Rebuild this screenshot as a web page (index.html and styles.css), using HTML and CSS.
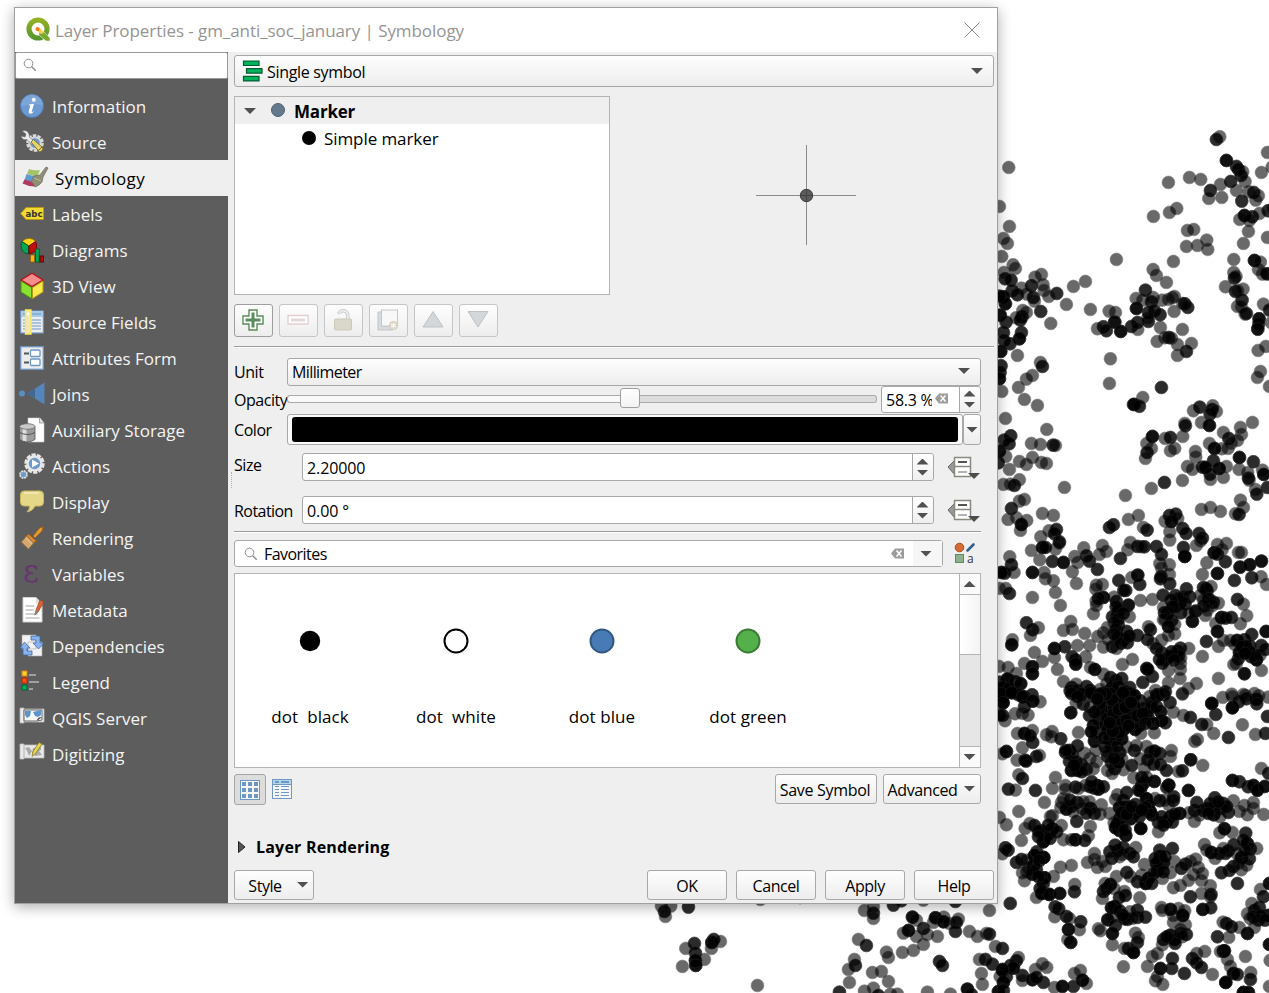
FILE: index.html
```html
<!DOCTYPE html>
<html lang="en">
<head>
<meta charset="utf-8">
<title>Layer Properties</title>
<link rel="stylesheet" href="styles.css">
</head>
<body>
<svg class="map" id="map" width="1269" height="993" viewBox="0 0 1269 993"></svg>
<div class="dialog">
  <header class="titlebar">
    <svg class="logo" width="26" height="26" viewBox="0 0 26 26"><defs><linearGradient id="q" x2="0" y2="1"><stop stop-color="#93b023"/><stop offset="1" stop-color="#589632"/></linearGradient></defs><circle cx="13" cy="12" r="9" fill="none" stroke="url(#q)" stroke-width="5.200"/><path d="M14 14l4 0 7 7v3h-4l-7-6z" fill="#78a82c" stroke="#fff" stroke-width=".5"/><path d="M12 11l4 1 3 4-3 1-4-3z" fill="#f5cf55"/><circle cx="12.500" cy="12" r="2" fill="#ee7913"/></svg>
    <span class="title">Layer Properties - gm_anti_soc_january | Symbology</span>
    <svg class="close" width="18" height="18" viewBox="0 0 18 18"><path d="M1.500 1.500l15 15M16.500 1.500l-15 15" stroke="#8c8c8c" fill="none"/></svg>
  </header>
  <div class="body">
    <nav class="side">
      <div class="search"><svg width="14" height="14" viewBox="0 0 14 14" fill="none" stroke="#8e8e8e"><circle cx="5.500" cy="5.500" r="4.300"/><path d="M8.700 8.700l4 4" stroke-width="1.500"/></svg></div>
      <div class="items">
        <div class="item"><svg viewBox="0 0 24 24"><circle cx="12" cy="12" r="11.500" fill="#6d9bd1" stroke="#4c7cb8"/><path d="M1 12a11 11 0 0 1 22-1Q12 9 1 12" fill="#87aedb" opacity=".6"/><circle cx="13.800" cy="5.800" r="2" fill="#fff"/><path d="M9 10.500l5-.8-2.300 8q0 1 2.500-.8-2 3.300-4.500 2.700-1.600-.5-.9-2.800l1.500-5q-.3-.7-1.700-.3z" fill="#fff"/></svg><span>Information</span></div>
        <div class="item"><svg viewBox="0 0 24 24"><circle cx="15" cy="13" r="7.500" fill="none" stroke="#dcdcdc" stroke-width="2.600" stroke-dasharray="3.500 1.200"/><circle cx="15" cy="13" r="5.800" fill="#6b9acb" stroke="#d6d6d6" stroke-width="2"/><path d="M2 1l4 3-1 3-4-1q1 4.500 6 3.500l5 5 2.500-2.500-5-5Q9.500 1.500 5 .5z" fill="#ececec" stroke="#666" stroke-width=".6"/><path d="M11 12l2.500-2.500 9.500 8.500q0 3-3.500 4z" fill="#e9d36c" stroke="#6b6026" stroke-width=".8"/><path d="M18.500 20.500l4-4" stroke="#6b6026"/></svg><span>Source</span></div>
        <div class="item active"><svg viewBox="0 0 26 24"><path d="M7 3q5 2 11 1l-3 7-10-3z" fill="#a4c46c"/><path d="M4.500 8l10 3-2 5-10-2z" fill="#5f9bd3"/><path d="M2.500 13.500l11 3-1 4q-6 0-12-3z" fill="#b03a5c"/><path d="M12 10l6-1 6-8 2 1-5 9-1 5q-3 4-7 5-1-4-4-5z" fill="#918e77" stroke="#74725f" stroke-width=".8"/><path d="M12 12l7 3" stroke="#bcb99c"/></svg><span>Symbology</span></div>
        <div class="item"><svg viewBox="0 0 24 24"><path d="M6 5.500h17.500v12H6L.7 11.500z" fill="#f2d934" stroke="#b99a12"/><text x="5.500" y="14.500" font-family="DejaVu Sans" font-size="9.500" font-weight="700" fill="#333" textLength="17" lengthAdjust="spacingAndGlyphs">abc</text></svg><span>Labels</span></div>
        <div class="item"><svg viewBox="0 0 24 24"><path d="M9 8L2 3.500Q9-3 16 3.500z" fill="#fcd116" stroke="#8a6d00" stroke-width=".8"/><path d="M8.500 8v8Q1 15 1 8q0-3 1-4.500z" fill="#00a651" stroke="#045c32"/><path d="M9 8v8q8-2 7.500-8 0-3-1-4.500z" fill="#c00d0d" stroke="#700"/><rect x="10.500" y="17" width="4" height="7" fill="#fcb416" stroke="#8a5d00" stroke-width=".7"/><rect x="15.500" y="11" width="3.800" height="13" fill="#00a651" stroke="#045c32"/><rect x="20" y="18" width="3.500" height="6" fill="#b20d0d" stroke="#600"/></svg><span>Diagrams</span></div>
        <div class="item"><svg viewBox="0 0 24 24"><path d="M12-.8L23 6 12 12.500 1 6z" fill="#f58d8d" stroke="#b5121b" stroke-width="1.300"/><path d="M1 7l10.500 6.500v11L1 18z" fill="#8ae234" stroke="#4e9a06"/><path d="M23 7l-10.500 6.500v11L23 18z" fill="#fce94f" stroke="#b59b10"/></svg><span>3D View</span></div>
        <div class="item"><svg viewBox="0 0 24 24"><rect x=".7" y="1" width="22.600" height="22" fill="#eee" stroke="#6d97c4" stroke-width="1.200"/><path d="M1 1h22v6H1z" fill="#a5cbe6"/><path d="M3 4h18M3 10h18M3 13h18M3 16h18M3 19h18" stroke="#6d97c4" stroke-dasharray="7 1.500 12"/><path d="M5.500 0h5.500v24H5.500z" fill="#efe6bd" stroke="#fce94f" stroke-width="1.400"/><circle cx="8.200" cy="4" r="1.400" fill="#fff"/></svg><span>Source Fields</span></div>
        <div class="item"><svg viewBox="0 0 24 24"><rect x=".7" y=".7" width="22.600" height="22.600" fill="#ececec" stroke="#6d97c4" stroke-width="1.300"/><path d="M4 7.500h5M4 16.500h5" stroke="#555" stroke-width="2"/><rect x="10.500" y="4" width="9.500" height="6.500" rx="1" fill="#fff" stroke="#6d97c4" stroke-width="1.300"/><rect x="10.500" y="13" width="9.500" height="6.500" rx="1" fill="#fff" stroke="#6d97c4" stroke-width="1.300"/></svg><span>Attributes Form</span></div>
        <div class="item"><svg viewBox="0 0 24 24"><circle cx="2" cy="11.500" r="3" fill="#5c8ec4"/><path d="M7 11.500L24.500.5v22z" fill="#5585ba"/><path d="M7 11.500l8-5v10z" fill="#416991"/></svg><span>Joins</span></div>
        <div class="item"><svg viewBox="0 0 24 24"><path d="M8 0h12l4 5v19H8z" fill="#fff" stroke="#ccc" stroke-width=".6"/><path d="M19.500 0v5H24" fill="#ddd" stroke="#888" stroke-width=".7"/><path d="M-.5 8.500v13q8 5 15.500 0v-13" fill="#9b9b9b" stroke="#555" stroke-width=".8"/><path d="M2.500 9.500v13l4 1v-13z" fill="#dedede"/><ellipse cx="7.300" cy="8.500" rx="7.700" ry="2.800" fill="#c8c8c8" stroke="#666" stroke-width=".8"/><path d="M-.5 14.500q8 4 15.500 0" fill="none" stroke="#555"/></svg><span>Auxiliary Storage</span></div>
        <div class="item"><svg viewBox="0 0 24 24"><circle cx="14.500" cy="9.500" r="8.700" fill="none" stroke="#e7e7e7" stroke-width="3" stroke-dasharray="4.200 1.200"/><circle cx="14.500" cy="9.500" r="7" fill="#6b9acb" stroke="#e7e7e7" stroke-width="2.500"/><path d="M12 5.500v8l7-4z" fill="#fff"/><circle cx="3.500" cy="20.500" r="3.500" fill="#6b9acb" stroke="#ddd" stroke-width="1.800" stroke-dasharray="2 .7"/></svg><span>Actions</span></div>
        <div class="item"><svg viewBox="0 0 24 24"><path d="M4 1h16q3.500 0 3.500 4v7q0 4-3.500 4h-5q-2 5-8 6 3-3 2.500-6H4Q.5 16 .5 12V5Q.5 1 4 1z" fill="#e4d888" stroke="#c8b95b"/><path d="M4 3h15" stroke="#f2ecbe" stroke-width="1.500"/></svg><span>Display</span></div>
        <div class="item"><svg viewBox="0 0 24 24"><path d="M13 10l7-8.500 3-.5-1 4-7 7z" fill="#e29a31" stroke="#9e641b"/><path d="M8.500 8l8 7-3 2-7-7z" fill="#d68e35" stroke="#9b5d18"/><path d="M6.500 10l7 7-5 6L1.500 16z" fill="#e0b77e" stroke="#9d7035"/><path d="M4.500 13l6 6M3.500 15l6 6" stroke="#b98d55"/></svg><span>Rendering</span></div>
        <div class="item"><svg viewBox="0 0 24 24"><text x="3" y="19.500" font-family="DejaVu Serif" font-size="31" fill="#68366f">ε</text></svg><span>Variables</span></div>
        <div class="item"><svg viewBox="0 0 24 24"><path d="M3-.5h13l6 6V24H3z" fill="#fff" stroke="#d2d2d2"/><path d="M16-.5v6h5" fill="#ddd"/><path d="M5.500 8h9M5.500 12h8M5.500 16h12M5.500 20h14" stroke="#a3a3a3" stroke-width="1.200"/><path d="M20 2l4 2-6 10-3 3 1-5z" fill="#dc6236" stroke="#96401e" stroke-width=".7"/><path d="M16 12l2 2-3.500 3.500z" fill="#888"/></svg><span>Metadata</span></div>
        <div class="item"><svg viewBox="0 0 24 24"><path d="M2 1h14v14H2zM8 8h14v14H8z" fill="#f2f2f2" stroke="#aaa" stroke-width=".6"/><path d="M11 2h9v7h4l-5.500 6L13 9h3V6h-5z" fill="#8ab3ec" stroke="#386bb0" stroke-width=".8"/><path d="M12 21H3v-7H0l4.500-6L10 14H7v3h5z" fill="#8ab3ec" stroke="#386bb0" stroke-width=".8"/></svg><span>Dependencies</span></div>
        <div class="item"><svg viewBox="0 0 24 24"><path d="M9 5h7M9 12h10M9 19h4" stroke="#a0a0a0" stroke-width="2"/><rect x="2" y="1" width="5" height="5" fill="#ffd12b" stroke="#db8510"/><rect x="2" y="8" width="5" height="5" fill="#ff4f12" stroke="#b52a00"/><rect x="2" y="15" width="5" height="5" fill="#00b05a" stroke="#045f31"/></svg><span>Legend</span></div>
        <div class="item"><svg viewBox="0 0 24 24"><path d="M0 2h4v15H0zM4 3h20v13H4z" fill="#eee" stroke="#b5b5b5" stroke-width=".8"/><path d="M4 4h18v10l-5 1H4z" fill="#f7f7f7" stroke="#666"/><path d="M5 5h6l-1 5-3 2-2-3zM13 6l8-2v5l-3 2-3-1z" fill="#5f94ca"/><path d="M17 15q0-4 5-4z" fill="#444"/></svg><span>QGIS Server</span></div>
        <div class="item"><svg viewBox="0 0 24 24"><path d="M0 2h4v15H0zM4 3h20v13H4z" fill="#e9e9e9" stroke="#bbb" stroke-width=".8"/><path d="M5 6l4-1 3 4-3 5-2-5zM13 6l8-1v3l-2 1 3 4-7 1-3-3z" fill="#aaa"/><path d="M12 14.500l1-5 6-9 3 1.500-6 9z" fill="#e6d850" stroke="#867a1f" stroke-width=".8"/></svg><span>Digitizing</span></div>
      </div>
    </nav>
    <main class="main">
      <div class="split"></div>
      <div class="combo renderer"><svg width="22" height="22" viewBox="0 0 22 22" fill="#00b25c" stroke="#075c32" stroke-width="1.200"><path d="M1.500 1h15.500v4.500H1.500zM4.500 8.700H20v4.500H4.500zM1.500 16.400h15.500v4.500H1.500z"/></svg><span class="ui">Single symbol</span><i class="tri"></i></div>
      <div class="symbol">
        <div class="tree">
          <div class="node root"><i class="tri"></i><i class="swatch slate"></i><b class="ui">Marker</b></div>
          <div class="node leaf"><i class="swatch black"></i><span>Simple marker</span></div>
        </div>
        <svg class="preview" width="100" height="100" viewBox="0 0 100 100"><path d="M0 50.500h100M50.500 0v100" stroke="#8b8b8b"/><circle cx="50.500" cy="50.500" r="6.200" fill="#5c5c5c" stroke="#3c3c3c"/><path d="M44 50.500h13M50.500 44v13" stroke="#444"/></svg>
      </div>
      <div class="tools">
        <div class="btn on"><svg viewBox="0 0 24 24"><path d="M8 2h8v6h6v8h-6v6H8v-6H2V8h6z" fill="#fff" stroke="#5a8c5a" stroke-width="1.400"/><path d="M12 4.500v15M4.500 12h15" stroke="#5a8c5a" stroke-width="3"/></svg></div>
        <div class="btn"><svg viewBox="0 0 24 24"><path d="M2 7.500h20v8.500H2z" fill="#fff" stroke="#e3cece" stroke-width="1.300"/><path d="M5 12h14" stroke="#e1d8d8" stroke-width="3"/></svg></div>
        <div class="btn"><svg viewBox="0 0 24 24"><rect x="3.500" y="11" width="17" height="11" rx="1" fill="#dad8cb" stroke="#cdcaba"/><path d="M18 11V6q-1-4.500-6-4.500-4 0-5.500 3.500l2 .8Q10 4 12 4q3.500 0 3.500 3v4" fill="#eee" stroke="#ccc"/></svg></div>
        <div class="btn"><svg viewBox="0 0 24 24"><path d="M2 4h4v14h11v4H2z" fill="#d8dbdd" stroke="#c1c5c8"/><rect x="5.500" y="2" width="16" height="16" fill="#f8f8f8" stroke="#c4c8ca"/><circle cx="17.500" cy="17.500" r="4.500" fill="#d6d2c0"/><path d="M17.500 14.500v6M15 16l5 3M20 16l-5 3" stroke="#fff" stroke-width="1.300"/></svg></div>
        <div class="btn"><svg viewBox="0 0 24 24"><path d="M12 3.500L22 19H2z" fill="#d4d7d9" stroke="#bfc2c5"/></svg></div>
        <div class="btn"><svg viewBox="0 0 24 24"><path d="M2 3.500h20L12 19z" fill="#d4d7d9" stroke="#bfc2c5"/></svg></div>
      </div>
      <hr class="rule wide">
      <div class="row unit"><label class="ui">Unit</label><div class="combo"><span class="ui">Millimeter</span><i class="tri"></i></div></div>
      <div class="row opacity"><label class="ui">Opacity</label><div class="slider"><div class="groove"></div><div class="knob"></div><div class="groove rest"></div></div>
        <div class="spin"><span class="ui clip">58.3 %</span><svg class="clear" width="14" height="11" viewBox="0 0 14 11"><path d="M0 5.500L4 .5h9v10H4z" fill="#9c9c9c"/><path d="M5.500 2.500l5 6M10.500 2.500l-5 6" stroke="#fff" stroke-width="1.500"/></svg><div class="steps"><i class="up"></i><i class="tri"></i></div></div></div>
      <div class="row color"><label class="ui">Color</label><div class="colorbox"><div></div></div><div class="drop"><i class="tri"></i></div></div>
      <div class="row size"><label class="ui">Size</label><div class="spin"><span class="ui num">2.20000</span><div class="steps"><i class="up"></i><i class="tri"></i></div></div><svg class="dd" width="34" height="26" viewBox="0 0 34 26"><path d="M8 5v15L1 12z" fill="#999" stroke="#666"/><path d="M7.500 2.500h16v19h-16zM8 11.500h15" fill="#fff" stroke="#89897f" stroke-width="1.500"/><path d="M11 7h9" stroke="#555" stroke-width="2"/><path d="M11 17h9" stroke="#888" stroke-width="1.300"/><path d="M21 18h12l-6 6z" fill="#4c4c4c"/></svg></div>
      <div class="row rotation"><label class="ui">Rotation</label><div class="spin"><span class="ui num">0.00 °</span><div class="steps"><i class="up"></i><i class="tri"></i></div></div><svg class="dd" width="34" height="26" viewBox="0 0 34 26"><path d="M8 5v15L1 12z" fill="#999" stroke="#666"/><path d="M7.500 2.500h16v19h-16zM8 11.500h15" fill="#fff" stroke="#89897f" stroke-width="1.500"/><path d="M11 7h9" stroke="#555" stroke-width="2"/><path d="M11 17h9" stroke="#888" stroke-width="1.300"/><path d="M21 18h12l-6 6z" fill="#4c4c4c"/></svg></div>
      <hr class="rule">
      <div class="row fav"><div class="favbox"><svg width="14" height="14" viewBox="0 0 14 14" fill="none" stroke="#8e8e8e"><circle cx="5.500" cy="5.500" r="4.300"/><path d="M8.700 8.700l4 4" stroke-width="1.500"/></svg><span class="ui">Favorites</span><svg class="clear" width="14" height="11" viewBox="0 0 14 11"><path d="M0 5.500L4 .5h9v10H4z" fill="#9c9c9c"/><path d="M5.500 2.500l5 6M10.500 2.500l-5 6" stroke="#fff" stroke-width="1.500"/></svg><div class="arrow"><i class="tri"></i></div></div>
        <svg class="manager" width="22" height="26" viewBox="0 0 22 26"><circle cx="5.500" cy="5.500" r="4.300" fill="#d56b36" stroke="#ac4b1a"/><path d="M13.500 8.500l6-6" stroke="#33608f" stroke-width="2.600" stroke-linecap="round"/><rect x="1.500" y="12.500" width="8" height="8" fill="#8fb08f" stroke="#54915a"/><text x="13" y="20.500" font-family="Open Sans" font-size="12" fill="#333">a</text></svg></div>
      <div class="list">
        <div class="cells">
          <div class="cell"><svg width="28" height="28" viewBox="0 0 28 28"><circle cx="14" cy="14" r="10.200"/></svg><span>dot&nbsp; black</span></div>
          <div class="cell"><svg width="28" height="28" viewBox="0 0 28 28"><circle cx="14" cy="14" r="11.500" fill="#fff" stroke="#000" stroke-width="2"/></svg><span>dot&nbsp; white</span></div>
          <div class="cell"><svg width="28" height="28" viewBox="0 0 28 28"><circle cx="14" cy="14" r="11.500" fill="#487bb6" stroke="#325780" stroke-width="2"/></svg><span>dot blue</span></div>
          <div class="cell"><svg width="28" height="28" viewBox="0 0 28 28"><circle cx="14" cy="14" r="11.500" fill="#54b04a" stroke="#3a7b33" stroke-width="2"/></svg><span>dot green</span></div>
        </div>
        <div class="scroll"><div class="end"><i class="up"></i></div><div class="thumb"></div><div class="track"></div><div class="end"><i class="tri"></i></div></div>
      </div>
      <div class="row views">
        <div class="toggle"><svg width="20" height="20" viewBox="0 0 20 20"><rect x=".5" y=".5" width="19" height="19" fill="#f6f6f6" stroke="#6d97c4"/><path d="M4 2v17M10 2v17M16 2v17" stroke="#6d97c4" stroke-width="4" stroke-dasharray="4 2"/></svg></div>
        <svg class="table" width="20" height="20" viewBox="0 0 20 20"><rect x=".5" y=".5" width="19" height="19" fill="#f6f6f6" stroke="#6d97c4"/><path d="M1 1h18v4H1z" fill="#b4d6eb"/><path d="M1 5.500h18M3 7.500h4M9 7.500h8M3 10.500h4M9 10.500h8M3 13.500h4M9 13.500h8M3 16.500h4M9 16.500h8" stroke="#6d97c4"/><path d="M3 3h4M9 3h8" stroke="#6d97c4" stroke-width="2"/></svg>
        <button class="push save ui">Save Symbol</button>
        <button class="push adv ui"><span>Advanced</span><i class="tri"></i></button>
      </div>
      <div class="group"><svg width="8" height="12" viewBox="0 0 8 12"><path d="M.5.5L7 6 .5 11.500z" fill="#555" stroke="#222"/></svg><b class="ui">Layer Rendering</b></div>
      <div class="foot"><button class="push style ui"><span>Style</span><i class="tri"></i></button><button class="push ui">OK</button><button class="push ui">Cancel</button><button class="push ui">Apply</button><button class="push ui">Help</button></div>
    </main>
  </div>
</div>
<script src="points.js"></script>
</body>
</html>
```
FILE: styles.css
```css
* { box-sizing: border-box; }
body { margin: 0; width: 1269px; height: 993px; overflow: hidden; position: relative; background: #fff; font-family: "Open Sans", "Noto Sans", sans-serif; font-size: 17px; color: #000; }
.map { position: absolute; left: 0; top: 0; display: block; }
.dialog { position: absolute; left: 14px; top: 7px; width: 984px; height: 897px; border: 1px solid #a0a0a0; background: #efefef; display: flex; flex-direction: column; box-shadow: 0 3px 13px rgba(0,0,0,.32); }
.titlebar { height: 44px; flex: none; background: #fff; display: flex; align-items: center; padding: 0 16px 0 10px; color: #949494; font-size: 17px; letter-spacing: -.07px; }
.logo { margin-right: 4px; }
.title { flex: 1; white-space: nowrap; }
.body { flex: 1; display: flex; min-height: 0; }
.side { width: 213px; background: #5d5d5d; }
.search { height: 27px; background: #fff; border: 1px solid #999; border-radius: 2px; padding: 5px 0 0 7px; }
.search svg { display: block; }
.items { padding-top: 9px; }
.item { height: 36px; display: flex; align-items: center; padding-left: 5px; color: #f4f4f4; white-space: nowrap; }
.item svg { width: 24px; height: 24px; margin: -1px 8px 0 0; overflow: visible; }
.item span { padding-top: 1px; }
.item.active { background: #efefef; color: #000; padding-left: 7px; }
.item.active svg { width: 26px; margin-right: 7px; }
.item.active span { letter-spacing: .4px; }
.main { flex: 1; padding: 3px 3px 3px 6px; display: flex; flex-direction: column; position: relative; min-width: 0; }
.split { position: absolute; left: 3px; top: 420px; height: 16px; border-left: 1px dotted #b0b0b0; }
.ui { font-size: 16px; letter-spacing: -.45px; white-space: nowrap; }
.combo, .push, .btn, .drop { border: 1px solid #a8a8a8; border-radius: 3px; background: linear-gradient(#fefefe, #ededed); }
.combo { display: flex; align-items: center; padding: 0 10px 0 4px; }
.combo .ui { flex: 1; padding-top: 2px; }
.tri { flex: none; width: 12px; height: 6px; background: #505050; clip-path: polygon(0 0, 100% 0, 50% 100%); }
.up { flex: none; width: 12px; height: 6px; background: #505050; clip-path: polygon(50% 0, 100% 100%, 0 100%); }
.renderer { height: 32px; padding: 0 10px 0 7px; }
.renderer svg { margin-right: 3px; }
.renderer .ui { letter-spacing: -.32px; }
.symbol { display: flex; margin-top: 9px; height: 199px; }
.tree { width: 376px; border: 1px solid #b4b4b4; background: #fff; }
.node { display: flex; align-items: center; height: 27px; }
.root { background: #efefef; padding: 0 0 0 9px; }
.root .tri { margin-top: 1px; }
.root .ui { font-size: 17px; letter-spacing: -.2px; padding-top: 2px; }
.swatch { width: 14px; height: 14px; border-radius: 50%; margin: -1px 9px 0 15px; }
.slate { background: #64798c; border: 1px solid #4a6377; }
.black { background: #000; margin: 0 8px 0 67px; }
.leaf span { padding-top: 1px; letter-spacing: -.08px; }
.preview { margin: 49px 0 0 146px; }
.tools { display: flex; gap: 6px; margin-top: 9px; height: 33px; }
.btn { width: 39px; display: grid; place-items: center; border-color: #c6c6c6; padding: 0 2px 1px 0; }
.btn.on { border-color: #9e9e9e; }
.btn svg { width: 24px; height: 24px; }
.rule { width: 747px; height: 2px; margin: 7px 0 0; border: 0; border-top: 1px solid #9c9c9c; border-bottom: 1px solid #fff; flex: none; }
.rule.wide { width: 760px; margin-top: 9px; }
.row { display: flex; width: 747px; flex: none; }
.row label { width: 53px; }
.unit { height: 28px; margin-top: 10px; align-items: center; }
.unit .combo { flex: 1; height: 28px; }
.unit .combo .ui { padding-top: 0; letter-spacing: -.6px; }
.unit .tri { margin-top: -2px; }
.opacity { height: 27px; align-items: center; }
.slider { width: 590px; display: flex; align-items: center; margin: -1px 4px 0 0; }
.groove { width: 333px; height: 8px; border: 1px solid #aaa; border-right: 0; border-radius: 3px 0 0 3px; background: #f9f9f9; }
.groove.rest { flex: 1; border: 1px solid #aaa; border-left: 0; border-radius: 0 3px 3px 0; background: #dcdcdc; }
.knob { width: 20px; height: 20px; margin-top: -2px; border: 1px solid #9e9e9e; border-radius: 3px; background: linear-gradient(#fff, #f2f2f2); }
.spin { flex: 1; height: 28px; display: flex; align-items: center; background: #fff; border: 1px solid #a8a8a8; border-radius: 3px; padding-left: 4px; }
.spin .ui { padding-top: 2px; flex: 1; }
.spin .num { letter-spacing: -.1px; }
.spin .clip { flex: none; width: 46px; overflow: hidden; letter-spacing: -.25px; padding-top: 0; }
.opacity .clear { flex: none; margin: -2px 10px 0 3px; }
.steps { flex: none; width: 21px; height: 100%; border-left: 1px solid #a8a8a8; display: flex; flex-direction: column; align-items: center; justify-content: center; gap: 5px; background: linear-gradient(#fff, #efefef); border-radius: 0 3px 3px 0; padding-right: 1px; }
.opacity .steps { padding-bottom: 1px; }
.opacity .spin { height: 27px; flex: none; width: 100px; }
.color { height: 31px; margin-top: 1px; align-items: center; }
.colorbox { width: 676px; height: 31px; border: 1px solid #a8a8a8; border-radius: 3px; background: #fafafa; padding: 2px 4px; }
.colorbox div { height: 25px; background: #000; border-radius: 3px; }
.drop { flex: 1; height: 31px; display: grid; place-items: center; }
.size, .rotation { height: 28px; margin-top: 8px; }
.rotation { margin-top: 15px; }
.size label, .rotation label { width: 68px; }
.size label { margin-top: 1px; }
.rotation label { padding-top: 4px; letter-spacing: -.55px; }
.size .spin, .rotation .spin { flex: none; width: 632px; }
.dd { margin: 2px 0 0 13px; flex: none; }
.fav { height: 27px; margin-top: 7px; }
.favbox { width: 709px; border: 1px solid #a8a8a8; border-radius: 3px; background: #fff; display: flex; align-items: center; padding-left: 9px; }
.favbox .ui { flex: 1; padding: 0 0 0 6px; letter-spacing: -.55px; }
.arrow { width: 29px; height: 100%; margin-left: 8px; background: #f6f6f6; display: grid; place-items: center; padding-right: 3px; }
.manager { margin: 2px 0 0 11px; }
.list { width: 747px; height: 195px; flex: none; margin-top: 6px; background: #fff; border: 1px solid #b4b4b4; display: flex; }
.cells { flex: 1; display: flex; padding-left: 2px; }
.cell { width: 146px; display: flex; flex-direction: column; align-items: center; padding-top: 53px; }
.cell span { margin-top: 50px; white-space: pre; letter-spacing: .1px; }
.scroll { width: 21px; border-left: 1px solid #b4b4b4; display: flex; flex-direction: column; }
.end { height: 20px; display: grid; place-items: center; background: #fafafa; padding-right: 1px; }
.thumb { height: 61px; border: solid #b4b4b4; border-width: 1px 0; background: linear-gradient(90deg, #fff, #f4f4f4); }
.track { flex: 1; background: #e6e6e6; border-bottom: 1px solid #b4b4b4; }
.views { margin-top: 6px; height: 31px; align-items: center; }
.table { margin-top: -1px; }
.toggle { width: 32px; height: 31px; border: 1px solid #a5a5a5; border-radius: 3px; background: #dcdcdc; display: grid; place-items: center; margin-right: 6px; }
.push { height: 30px; padding: 2px 0 0; font-family: inherit; color: #000; display: flex; align-items: center; justify-content: center; }
.views .push { padding-top: 1px; margin-top: -1px; }
.views .save { width: 102px; margin-left: auto; letter-spacing: -.3px; padding-right: 2px; }
.views .adv { width: 98px; margin-left: 6px; gap: 6px; padding-right: 4px; letter-spacing: -.4px; }
.adv .tri { margin-top: -2px; margin-right: -3px; }
.group { display: flex; align-items: center; height: 24px; margin: 30px 0 0 4px; gap: 10px; }
.group .ui { letter-spacing: .2px; }
.foot { display: flex; gap: 9px; margin-top: auto; height: 30px; }
.foot .push { width: 80px; }
.foot .style { margin-right: auto; gap: 15px; padding-left: 9px; }
.style .tri { margin-top: -3px; }
```
FILE: points.js
```js
// Incident points, stored in thirds of a pixel relative to each tile's origin.
// A third number is the count of incidents stacked on that location.
const tiles = [
  { x: 990, y: 120, pts: `56,142 28,259 58,319 40,355 52,370 35,409 69,434 76,445 42,457 45,476,2 63,480,2 66,512,2 94,504 124,497,2 135,471 154,463 159,494 162,511 130,532,2 133,543 176,529 200,520,2 40,530,3 46,551,3 28,528,2 30,585,3 48,606,2 82,524,2 110,522 96,590,2 91,600,2 98,571 109,577 78,593 152,574,2 182,610 40,637,2 94,637,2 88,656,3 42,661,2 60,671,2 32,694,3 82,706 33,737,2 30,757,2 28,776,3 35,814 151,727 157,739,2 127,766 109,777 85,802 103,838 142,856 229,553 250,499 286,484 379,418 301,568 357,573 376,577 374,606,3 361,716 358,790 340,620,2 322,626 349,632,2 392,634,3 424,619,2 442,607,2 443,628 438,535 439,565,3 466,510,2 458,540 489,532 484,545,2 516,540 475,577,2 493,572,2 475,604,2 473,594 510,584,2 550,424 489,448 499,466 529,487 547,533 553,529 535,538 552,574 584,551,2 593,562,2 578,550 577,628 511,622 501,664 536,652,2 524,653 544,654 562,673 562,706 589,694,2 604,670 535,187 598,172 632,178 490,289 538,277 560,265 592,331 611,328 589,379 622,376 650,360 653,388 514,802,2 458,832 433,853,2 448,858 689,50 679,58,2 709,121,3 739,139,2 745,148,2 758,155 753,166,2 765,184 722,184,2 691,193 661,211,2 656,235 695,232 739,211 776,215 791,217,2 805,227 797,240 755,243,2 832,97 814,157 846,141 749,298 763,286,3 787,290,2 778,301 808,280 834,272,2 848,266 775,334 760,370 832,352 731,418 793,421,3 811,426 805,448 831,461,3 817,462 731,457 733,474,2 738,469 706,500 736,514,2 759,507 743,512 756,540,2 742,559 754,560 769,580,2 765,582 807,596,3 806,611,2 803,627,3 820,552 838,570,2 844,608 804,691 827,679 811,754 802,772 838,799` },
  { x: 990, y: 400, pts: `46,55 62,107,2 42,120,2 57,131,2 28,153,3 47,169 25,188,2 58,208 88,239 40,253 73,256,2 61,252 170,88 124,130 151,133 189,135,2 196,136 127,172 88,184 109,193 154,187 169,190 223,262 103,298 88,303 64,325,2 54,358 79,353 110,361 94,373,3 91,391 157,340 190,346 406,286 484,265 523,247,2 577,241 415,358 445,346 370,374,2 358,382,2 460,382 471,390,2 487,109,3 470,130 484,145 471,157,2 466,175 430,13,2 448,19 525,115 541,112,2 554,145 541,152 578,109 584,70 586,77,2 610,32 629,21,2 668,17 666,28,2 660,42,2 679,34 634,67 658,76,3 787,67 751,82 700,97 716,115,2 754,103 742,121 724,129 658,130 673,145,3 695,146 616,154 617,171 670,182,2 592,199 607,208 637,201,2 646,202,3 687,205,3 709,199 660,222,2 661,238 700,232 714,145 748,172,3 790,185,2 747,208 773,217 775,234,2 777,240 817,210 821,223,3 796,268 800,282,2 832,262,2 751,300 760,322 736,341 747,343,2 634,328 661,322 691,334 538,346,2 557,342,2 544,364,3 525,363 563,355 578,385,2 588,400,2 539,420 539,395 627,400,2 637,414,2 632,422 619,436 709,430 682,433 672,458,3 682,462,2 696,449 650,488 706,485,2 682,520,3 637,523 745,457 754,457 750,501,3 779,494,3 814,483,3 785,533,2 733,541,2 813,530 829,553 152,410 177,392 199,388,2 193,401,2 208,425,2 124,451 157,442,3 166,442,2 196,447 208,429 149,479 187,484,2 220,487,3 127,517,3 59,470 64,494,2 72,517 44,519,2 34,517,3 28,565 47,565 58,580,2 162,517 166,536 190,542 127,592 196,577 211,616 259,550 281,443 289,467,2 298,483,2 254,469 263,487 247,515 322,508,2 337,436 349,454 328,463 391,475,2 421,427 413,449 442,439,2 454,440 463,440,2 499,439,2 514,463,2 509,490 538,494 538,523 514,504 513,529,2 511,536,2 539,551,2 580,442,2 584,469,4 443,525,3 425,532 449,553,2 386,541,2 407,571,2 401,571,2 337,553 319,555 317,567 340,592,3 325,595,2 318,603 319,616 310,641 451,601 487,598 415,615,3 379,604,2 372,591 386,631,3 367,650,2 381,647,2 385,656,2 418,650 519,585,2 556,586,2 565,596,3 570,608,3 589,566,2 599,590,2 565,601,2 556,619,2 572,638,2 533,640,4 525,658 523,638,2 520,659 545,661,2 554,673 535,679,3 607,664,3 616,634,2 617,632 646,646 640,562,2 651,572,2 648,566,2 663,559 656,597,3 670,606,2 685,609 667,616 641,618,2 694,652,3 706,654,2 724,652,2 677,670 682,694,3 742,598,2 760,612 770,647 109,668,2 145,683 128,689,2 121,706 67,719 65,734,3 133,757 157,784 103,790 127,800,3 127,821,3 193,745,3 224,740,2 193,772 202,808 242,664 220,691 247,688 284,700 262,736 299,736 287,770 246,770,2 256,779,2 257,792,3 352,682 385,674,2 378,688,2 410,694,2 401,718,4 385,712,3 367,740,2 355,718 340,741 379,745 323,709 475,680 481,689,2 442,706,2 472,718,2 488,730 515,720 535,706 554,701 499,745,2 514,757,2 523,779,3 536,772,2 517,789,2 538,769,2 563,754,2 571,744,2 596,745 572,773 571,790 571,808 570,835 535,811 535,848 566,767,2 649,724,2 685,739 700,721 637,769 397,793 427,778 301,802 314,808,3 340,822 220,844 245,862,2 258,852 289,859,2 240,872,2 262,871,2 361,832,2 377,841,2 395,835,2 419,862,2 373,877,3 388,884,4 365,864,3 340,880,3 406,874,2 420,880,3 470,805,3 487,829,2 458,847,2 473,808,2 496,871 501,884,4 521,884,2 577,880 595,865 619,850 685,835 751,671 741,721,3 763,719,2 785,703,2 828,694,3 721,721 734,733 766,739,3 748,757,3 745,776,2 763,821,3 739,790 731,793 776,754,3 799,779,4 793,766,3 814,736,2 826,748,2 814,811 54,802 27,799 52,837,4 28,846,2 37,862,3 58,865,3 76,845,2 92,851,3 72,877,2 85,884,2 39,888,2 100,889,2 126,884,2 79,820 725,882 766,886 793,880 806,887 543,600,2 548,620,2 520,622 585,612,2 580,590 597,640 632,585 640,600 652,630 378,620,2 400,640,2 372,668 392,730,2 412,728,2 418,708,2 372,702,2 340,698 545,755,2 552,780,2 508,778,2 756,740,2 780,738,2 783,770,2 765,760,2 810,765 350,850 385,860,2 330,868 275,882,2 300,870,2 310,888,2` },
  { x: 990, y: 690, pts: `34,11,3 65,8,3 97,20,3 128,33,3 39,38,4 28,74,2 45,92 38,76,2 103,50,2 97,70 75,71 150,35 114,75 82,130 103,130,3 127,121 128,157,2 120,137,2 97,173 148,196 139,199,2 81,210 105,210,2 108,213,2 49,184,3 37,191 86,254 97,265,2 136,301,2 55,297,2 76,300 196,262 187,295 163,337 86,364 226,286 169,134 186,124 184,140 212,146,2 265,127 242,68,3 298,76,2 274,12,2 302,8,3 244,10,2 280,42,2 340,63,3 346,37,2 361,11,2 382,27,4 412,22,4 433,16,3 450,32,2 326,87,3 310,106,3 320,125,2 313,153,3 346,103,4 353,117,4 376,84,4 399,70,4 415,63,3 430,103,3 401,118,3 361,142,4 343,142,3 376,145,3 395,146,3 448,107,2 475,85,2 471,68,2 463,54,2 482,53,2 502,16,4 526,5,2 540,37,2 512,65,3 514,91,3 526,98,2 490,100,3 484,38,2 355,64,4 371,55,4 399,40,4 326,60,3 433,49,3 421,80,4 385,102,4 409,91,3 435,118,3 330,41,3 313,66,2 352,86,3 388,126,3 415,107,3 442,76,3 399,8,3 366,29,4 347,12,3 370,73,3 304,125,3 368,123,4 359,98,4 386,58,4 406,51,4 423,37,4 550,66 580,76 601,82,2 577,12 635,103,2 650,103 665,40,4 677,73,2 727,53,4 698,22 727,20 746,35,2 757,104 671,130 622,148 614,154 715,142,2 799,27,3 800,41,2 769,26,2 760,13 834,21 832,79,2 796,133 826,130,2 238,181,3 247,195,2 262,167,2 226,187,2 283,189 238,214,2 244,241,3 263,241,3 289,238,2 274,223,2 310,236 364,169,2 389,188,2 364,218,2 374,236,2 352,241 400,239 385,217,3 352,199,2 425,226,2 439,166 433,181,2 469,169 481,187,2 493,183,3 509,190,2 544,181 541,199 451,206 463,235 473,209,2 490,222,2 511,223,2 529,241,2 493,274,3 464,276,2 431,263 455,287,3 536,285,4 602,209,3 638,226 565,244 577,242,2 595,301,3 227,181,2 322,287,4 313,294,2 325,297,3 256,291,2 226,298 265,295 286,286 410,307,2 382,314 376,328 451,302,2 469,326,4 475,346,4 480,364,4 509,332,2 551,320,2 550,331,2 536,344 214,337 262,337,2 244,349,2 229,357,3 260,394,2 220,325 277,356 301,355,3 313,370,2 289,369,2 334,344 359,370 388,352,3 407,353,3 436,368,3 422,386,3 389,385,3 382,401,3 388,421,3 407,436,3 452,415,4 466,352,3 436,343,2 376,413,3 485,374,3 569,370,3 541,379,3 529,395,3 505,397,2 547,396,2 505,425 613,394 613,361,2 640,361,2 620,337,2 650,356,2 674,323,2 674,349,3 671,374,3 691,355,2 715,367,2 700,340,2 730,332 727,271,3 748,275,2 774,290,2 790,286,3 802,300,4 824,289,3 836,250,2 814,235 790,337 790,355 763,346 772,374 821,373 748,364 689,428 703,416,3 727,427 767,429,2 772,460,3 781,476,2 754,503,4 731,464,2 706,490,2 715,482,2 643,463 664,487,3 688,490,2 754,539 778,506,2 730,529,2 718,541,2 694,548,2 742,580,2 49,404 28,382 46,473,2 54,480,2 37,491 94,451 119,400 105,415 133,406,2 154,422,2 187,416,3 160,455,4 172,434,3 163,436,3 145,423,2 214,406 187,377 181,379 301,409 295,437 256,449,3 284,451,2 220,449 244,449 79,517,2 94,508,2 133,497,4 161,502,4 130,526,3 115,534 97,548 127,552,3 103,572 163,563,4 190,559 139,540,2 160,580,2 139,622 155,610,4 178,613,4 209,610,3 254,583 253,605,2 195,650,2 206,656,2 211,531 244,526 313,490 292,517 313,508 337,514 322,532 346,529 365,505,2 359,485,2 383,482,2 400,472,2 397,493 419,490,2 437,472 430,500,2 463,523 410,547,2 379,559 421,559 361,583,3 340,604,2 349,596,2 337,625 403,604 406,616,2 388,622,2 449,623 442,575,2 467,580,4 475,565,3 503,541,3 520,519,3 511,500,4 509,480,2 547,475,2 499,521,3 490,550,2 517,565 541,548 553,514 574,535,2 586,522,2 601,514 617,507 625,532 610,553 637,550 595,571 634,571 571,586 550,593 661,587 663,613,2 634,610 601,620,2 661,620 638,658,3 662,653,2 514,652 517,661 541,658,3 550,676 584,662 578,676,4 586,704 550,697 194,680 229,679,2 238,685 272,695,2 268,719 235,718,3 242,757,3 233,748 374,649,3 364,653,3 367,680 353,689,3 376,706,2 325,716 331,722 367,730,3 367,764 388,661,2 403,686,2 412,688,2 442,660,2 442,682,2 466,681,2 427,685 436,729 445,742 442,757,2 415,775,2 430,787,4 403,775 400,830 520,748,2 541,735,3 553,748,3 571,730,2 589,733,2 571,718 577,740 517,764 502,790 487,799 472,829 511,835,3 547,805,2 545,835,2 583,850,2 502,859 496,872 518,883 644,784 620,790 607,805,2 619,818,2 634,832,2 667,853 682,740,2 716,742 699,696 709,700,2 724,710,2 748,712 772,730,3 700,783,3 691,784 703,782,3 712,808 766,799 721,829 730,850,3 742,853,2 707,877,4 782,847 781,868,2 834,676,3 808,652,2 772,671 793,661,2 790,680,2 811,677,3 820,620,2 811,598 838,580,3 793,712 838,763,3 840,811 838,889 760,907,4 775,907,3 85,802 79,812,2 61,826,2 70,834,3 37,841,2 49,860,2 97,856,2 97,871 40,877,3 127,869,3 136,838 157,821 170,832 160,877,2 139,862,2 193,892 217,889,3 250,889,2 271,841 253,850 277,870,3 289,880 25,904,3 40,901,2 37,775 61,640 258,38 262,20,2 300,52 330,12,3 322,26,3 458,70,2 466,100,2 452,130 493,128 500,50,2 478,20 380,170,2 345,170,2 350,185 395,205 372,205,2 366,250 410,170 320,215 318,180 300,205 258,215,2 275,245,2 252,226,2 300,290,2 340,290,2 305,275,2 455,262,2 470,262 445,300,2 495,325 525,330 530,292,2 400,330,2 395,368,3 410,372,3 425,350,2 448,380,2 455,360,2 395,410,2 372,398 405,420,2 330,372 298,335 280,335 240,330,2 250,365 212,352 515,380,2 520,405,2 555,372,2 597,368 628,375 660,340,2 655,370,2 690,380 710,350,2 685,335,2 145,440,2 180,445,2 200,425,2 175,405,2 140,485,2 148,512,2 110,510 110,545 145,560,2 150,595,2 375,465,2 388,500 345,580 372,595 455,555 485,580,2 520,545,2 495,505,2 525,500,2 650,480 675,505 700,475 740,490 765,480,2 760,450,2 745,520 770,525 800,475 785,640 805,690,2 825,690,2 780,685 565,655 555,760,2 530,740,2 420,665 398,675,2` },
  { x: 640, y: 890, pts: `64,48 92,48 73,64,2 76,79 145,51,2 361,28 480,22,2 137,175 163,160,2 166,189,2 193,208 166,211,3 167,226,3 127,229 215,157,3 221,148,2 241,154 214,175 352,286 673,61 700,49 700,69,2 700,85 760,45,2 784,32,2 850,30 946,34,2 1048,61 1110,40 817,81,3 829,90 790,129 805,121,3 829,139 850,115,2 862,133 850,163 892,139 880,97 886,83,3 911,81 910,95,3 928,100 955,87 949,97,2 946,124,2 988,124 1012,139 1039,130 1048,132,2 820,181 787,187 655,148 679,166,2 739,186 745,202 643,208 646,226,2 625,238 628,277 697,247 724,244 745,274 898,214,2 907,226,2 673,303 700,294 598,306,2 715,316,2 751,312 772,312 862,306 931,312 982,297,3 994,313,2 1024,250 1027,283 1018,208 1036,208,2 1057,222,2 1066,169 1087,175 1087,238,3 1080,259` }
];

const NS = "http://www.w3.org/2000/svg";
const map = document.getElementById("map");
for (const tile of tiles) {
  for (const token of tile.pts.split(" ")) {
    const [x, y, count = 1] = token.split(",").map(Number);
    for (let i = 0; i < count; i++) {
      const dot = document.createElementNS(NS, "circle");
      dot.setAttribute("cx", tile.x + x / 3 + 0.1);
      dot.setAttribute("cy", tile.y + y / 3 + 0.1);
      dot.setAttribute("r", 6.4);
      dot.setAttribute("stroke", "#232323");
      dot.setAttribute("stroke-width", 0.6);
      dot.setAttribute("opacity", 0.583);
      map.appendChild(dot);
    }
  }
}
```
